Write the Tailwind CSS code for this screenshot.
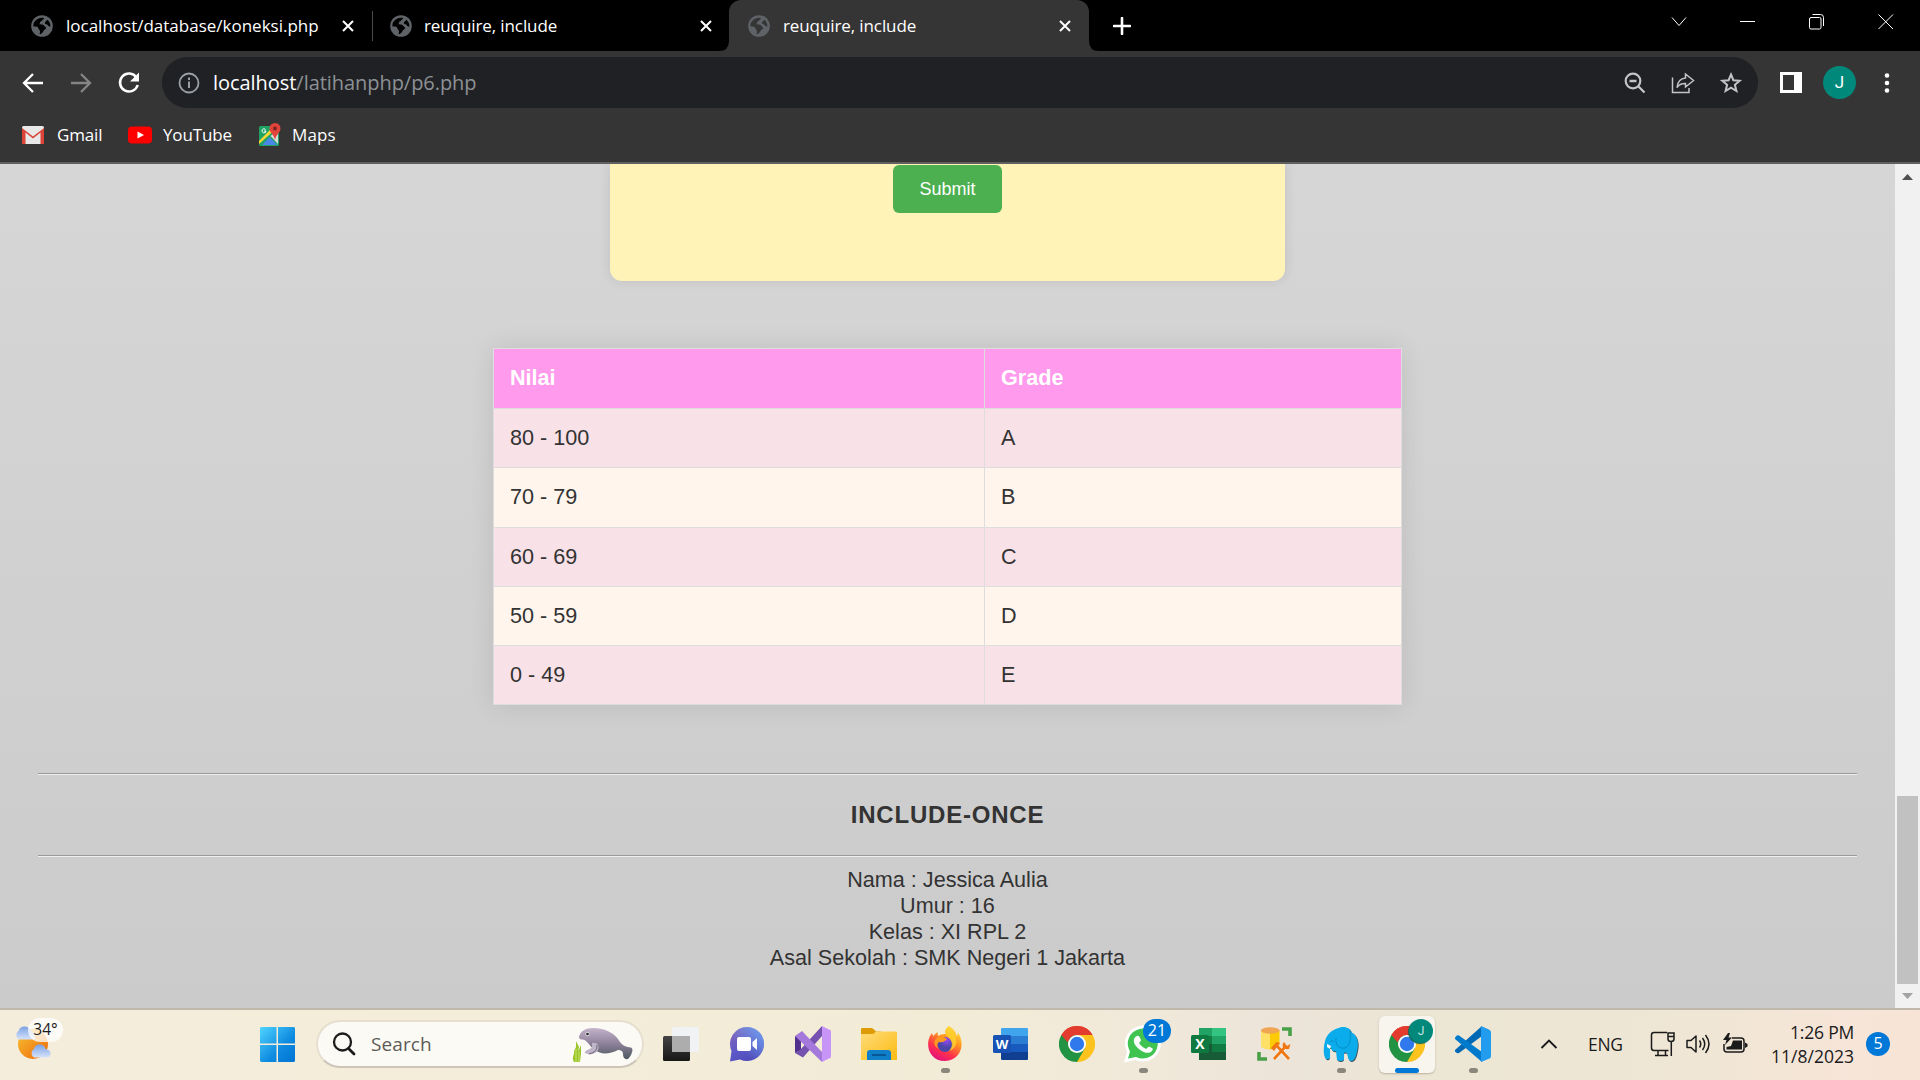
<!DOCTYPE html>
<html lang="en">
<head>
<meta charset="utf-8">
<title>reuquire, include</title>
<script src="https://cdn.jsdelivr.net/npm/@tailwindcss/browser@4"></script>
</head>
<body class="w-[1920px] h-[1080px] overflow-hidden flex flex-col bg-black font-['Open_Sans','Noto_Sans',sans-serif]">
<svg class="hidden">
  <symbol id="globe" viewBox="0 0 22 22"><circle cx="11" cy="11" r="10.8" fill="#5f6368"/><path class="fill-(--land)" d="M3 7.500C5 4 8 2.500 12.500 2.700L13 4C11 4.600 11.500 6 10 6.300C8.500 6.800 9.500 8.500 8 9.200C9.500 9.500 12 9 13 10.500C13.500 11.800 15 11.500 15 13C15 14.500 13 14.500 12.500 16C12.200 17.800 10.500 18 9.500 19.300L8.500 19C9.500 16.500 9 15.500 8 14.500C7 13.500 7.500 12.500 6.500 12C5 11.300 3.300 11.500 2.500 11.500C2.300 10 2.500 8.500 3 7.500ZM16.500 4.800C18.500 6.500 19.500 9 19.400 11.800L17.500 11C16.500 10.500 16.700 9 15.300 9.200C13.700 9.200 13.500 7.700 14.500 6.800Z"/></symbol>
  <symbol id="cross" viewBox="0 0 12 12"><path d="M1 1 11 11M11 1 1 11" stroke="#fff" stroke-width="2" fill="none"/></symbol>
  <symbol id="chrome" viewBox="0 0 36 36">
    <path d="M18 18 2.400 9A18 18 0 0 1 33.600 9Z" fill="#e33b2e"/><path d="M18 18 33.600 9A18 18 0 0 1 18 36Z" fill="#fcc31e"/><path d="M18 18V36A18 18 0 0 1 2.400 9Z" fill="#229342"/>
    <path d="M18 9H33.600L25.800 22.500Z" fill="#fcc31e"/><path d="M25.800 22.500 18 36L10.200 22.500Z" fill="#229342"/><path d="M10.200 22.500 2.400 9H18Z" fill="#229342"/><path d="M2.400 9A18 18 0 0 1 33.600 9H18A9 9 0 0 0 10.200 13.500L8 17Z" fill="#e33b2e"/><path d="M2.400 9 10.200 22.500 9 17Z" fill="#229342"/>
    <circle cx="18" cy="18" r="9" fill="#fff"/><circle cx="18" cy="18" r="7.200" fill="#3079ed"/>
  </symbol>
</svg>

<!-- Tab strip -->
<div class="h-[51px] shrink-0 flex items-start text-white text-[17px] whitespace-nowrap">
  <div class="w-[373px] h-[51px] flex items-center pl-[31px] pr-0">
    <svg class="size-[22px] mr-[13px] [--land:#000]"><use href="#globe"/></svg>
    <span class="w-[276px]">localhost/database/koneksi.php</span>
    <svg class="size-3"><use href="#cross"/></svg>
    <span class="ml-auto w-px h-[30px] bg-[#4a4a4a]"></span>
  </div>
  <div class="w-[356px] h-[51px] flex items-center pl-[17px]">
    <svg class="size-[22px] mr-[12px] [--land:#000]"><use href="#globe"/></svg>
    <span class="w-[276px] tracking-[-0.1px]">reuquire, include</span>
    <svg class="size-3"><use href="#cross"/></svg>
  </div>
  <div class="relative w-[360px] h-[51px] flex items-center pl-[19px] bg-[#353535] rounded-t-[12px]">
    <svg class="absolute left-[-10px] bottom-0 size-[10px]" viewBox="0 0 10 10"><path d="M10 0V10H0Q10 10 10 0Z" fill="#353535"/></svg>
    <svg class="absolute right-[-10px] bottom-0 size-[10px]" viewBox="0 0 10 10"><path d="M0 0V10H10Q0 10 0 0Z" fill="#353535"/></svg>
    <svg class="size-[22px] mr-[13px] [--land:#353535]"><use href="#globe"/></svg>
    <span class="w-[276px] tracking-[-0.1px]">reuquire, include</span>
    <svg class="size-3"><use href="#cross"/></svg>
  </div>
  <svg class="w-[18px] h-[18px] ml-[24px] mt-[17px]" viewBox="0 0 18 18"><path d="M9 1V17M1 9H17" stroke="#fff" stroke-width="2.600" stroke-linecap="round"/></svg>
  <div class="ml-auto mr-[26px] mt-[14px] flex gap-[53px]">
    <svg class="size-4" viewBox="0 0 16 16"><path d="M1 3.500 8 11.500 15 3.500" stroke="#fff" fill="none"/></svg>
    <svg class="size-4" viewBox="0 0 16 16"><path d="M0 7.500H15" stroke="#fff"/></svg>
    <svg class="size-4" viewBox="0 0 16 16"><rect x=".5" y="3.500" width="11.500" height="11.500" rx="1.500" stroke="#fff" fill="none"/><path d="M3.500 .5H11.500Q14.500 .5 14.500 3.500V12" stroke="#fff" fill="none"/></svg>
    <svg class="size-4" viewBox="0 0 16 16"><path d="M.5 .5 15 15M15 .5 .5 15" stroke="#fff"/></svg>
  </div>
</div>

<!-- Toolbar -->
<div class="h-[63px] shrink-0 bg-[#353535] flex items-center pl-[21px]">
  <svg class="size-6 mr-6" viewBox="0 0 24 24"><path d="M22 12H3.500M12 3 3 12 12 21" stroke="#fff" stroke-width="2.300" fill="none"/></svg>
  <svg class="size-6 mr-6" viewBox="0 0 24 24"><path d="M2 12H20.500M12 3 21 12 12 21" stroke="#858585" stroke-width="2.300" fill="none"/></svg>
  <svg class="size-6 mr-[21px]" viewBox="0 0 24 24"><path d="M19.500 6.500A9 9 0 1 0 20.700 14" stroke="#fff" stroke-width="2.500" fill="none"/><path d="M22 1.500V10.500H13Z" fill="#fff"/></svg>
  <div class="w-[1596px] h-[51px] rounded-full bg-[#202124] flex items-center pl-[16px] pr-[15px]">
    <svg class="size-[22px] mr-[13px]" viewBox="0 0 22 22"><circle cx="11" cy="11" r="9.500" stroke="#9aa0a6" stroke-width="1.800" fill="none"/><path d="M11 9.500V16M11 5.500V8" stroke="#9aa0a6" stroke-width="2"/></svg>
    <span class="text-[20px] text-[#8d9196] whitespace-nowrap tracking-[-0.05px]"><span class="text-white">localhost</span>/latihanphp/p6.php</span>
    <svg class="ml-auto size-6 mr-6" viewBox="0 0 24 24"><circle cx="10" cy="10" r="7.300" stroke="#c3c4c6" stroke-width="2.200" fill="none"/><path d="M6.500 10H13.500M15 15 21.500 21.500" stroke="#c3c4c6" stroke-width="2.300"/></svg>
    <svg class="size-6 mr-6" viewBox="0 0 24 24"><path d="M1.500 6.500V21.500H18V17M14.500 3 22.500 9.500 14.500 16V12.500C10.500 12.300 8 13.500 6 16.500C6.500 11 9.500 7.500 14.500 7Z" stroke="#c3c4c6" stroke-width="1.500" fill="none"/></svg>
    <svg class="size-6" viewBox="0 0 24 24"><path d="M12 3.500 14.400 9.200 20.700 9.700 15.900 13.800 17.400 20 12 16.700 6.600 20 8.100 13.800 3.300 9.700 9.600 9.200Z" stroke="#c3c4c6" stroke-width="2" fill="none"/></svg>
  </div>
  <svg class="w-[22px] h-[21px] ml-[22px]" viewBox="0 0 22 21"><path fill-rule="evenodd" d="M0 0H22V21H0ZM3 3V18H14V3Z" fill="#fff"/></svg>
  <div class="size-[33px] ml-[21px] rounded-full bg-[#00897b] text-white text-[17px] flex items-center justify-center font-[Roboto]">J</div>
  <svg class="w-[6px] h-[22px] ml-[28px]" viewBox="0 0 6 22"><circle cx="3" cy="3.500" r="2.300" fill="#fff"/><circle cx="3" cy="11" r="2.300" fill="#fff"/><circle cx="3" cy="18.500" r="2.300" fill="#fff"/></svg>
</div>

<!-- Bookmarks bar -->
<div class="h-[50px] shrink-0 bg-[#353535] border-b-2 border-[#606060] flex items-center pl-[21px] pb-[7px] text-white text-[17px] whitespace-nowrap">
  <svg class="w-6 h-[22px] mr-3" viewBox="0 0 24 22"><rect x="1" y="2" width="22" height="18" rx="1.500" fill="#e8e8e8"/><path d="M1 20V4L12 12.500 23 4V20H19.500V8.500L12 14.500 4.500 8.500V20Z" fill="#dc4437"/></svg>
  <span class="w-[71px] tracking-[-0.15px]">Gmail</span>
  <svg class="w-6 h-[22px] mr-[11px]" viewBox="0 0 24 22"><rect y="2.500" width="24" height="17" rx="4" fill="#f00"/><path d="M9.500 7.500 16 11 9.500 14.500Z" fill="#fff"/></svg>
  <span class="w-[95px] tracking-[-0.15px]">YouTube</span>
  <svg class="w-[23px] h-[24px] mr-[11px]" viewBox="0 0 23 24"><rect x="1" y="3" width="20" height="20" rx="1.500" fill="#1ea362"/><path d="M1 21V18L15 4H20Z" fill="#fdd835"/><path d="M12.500 13 20 7V21Z" fill="#dadada"/><path d="M4 22 11.500 14 19.500 22Z" fill="#4a86e8"/><path d="M17 0A5.500 5.500 0 0 1 22.500 5.500C22.500 10 18 11 17 17C16 11 11.500 10 11.500 5.500A5.500 5.500 0 0 1 17 0Z" fill="#e0443a"/><circle cx="17" cy="5.500" r="1.900" fill="#7b231e"/><path d="M7.500 6.500A2 2 0 1 0 8 8H6" stroke="#fff" fill="none"/></svg>
  <span class="tracking-[0.1px]">Maps</span>
</div>

<!-- Web page -->
<div class="h-[844px] shrink-0 flex font-['Liberation_Sans',Arial,sans-serif]">
  <main class="w-[1895px] h-full overflow-hidden bg-linear-to-b from-[#d6d6d6] to-[#cbcbcb] flex flex-col items-center text-[#333] text-[21.6px]">
    <section class="w-[675px] h-[117px] shrink-0 rounded-b-[12px] bg-[#fff3b8] shadow-[0_0_12px_rgba(0,0,0,0.1)] flex justify-center items-start pt-px">
      <button class="w-[109px] h-[48px] rounded-[6px] bg-[#4caf50] text-white text-[18px]">Submit</button>
    </section>
    <table class="w-[909px] h-[357px] mt-[67px] border-collapse table-fixed text-left shadow-[0_0_24px_rgba(0,0,0,0.1)] [&_td]:border [&_th]:border [&_td]:border-[#ddd] [&_th]:border-[#ddd] [&_td]:px-4 [&_th]:px-4 [&_td]:py-0 [&_th]:py-0">
      <colgroup><col class="w-[491px]"><col></colgroup>
      <tr class="h-[60px] bg-[#ff9aed] text-white"><th>Nilai</th><th>Grade</th></tr>
      <tr class="h-[59px] bg-[#f8e1e7]"><td>80 - 100</td><td>A</td></tr>
      <tr class="h-[60px] bg-[#fff5ec]"><td>70 - 79</td><td>B</td></tr>
      <tr class="h-[59px] bg-[#f8e1e7]"><td>60 - 69</td><td>C</td></tr>
      <tr class="h-[59px] bg-[#fff5ec]"><td>50 - 59</td><td>D</td></tr>
      <tr class="h-[59px] bg-[#f8e1e7]"><td>0 - 49</td><td>E</td></tr>
    </table>
    <div class="w-[1819px] mt-[68px] h-[2px] shrink-0 border-t border-b border-t-[#9a9a9a] border-b-[#eee]"></div>
    <h2 class="h-[80px] shrink-0 flex items-center pb-px text-[24px] font-bold tracking-[0.8px]">INCLUDE-ONCE</h2>
    <div class="w-[1819px] h-[2px] shrink-0 border-t border-b border-t-[#9a9a9a] border-b-[#eee]"></div>
    <div class="pt-[10px] text-center leading-[26px]">
      <p>Nama : Jessica Aulia</p><p>Umur : 16</p><p>Kelas : XI RPL 2</p><p>Asal Sekolah : SMK Negeri 1 Jakarta</p>
    </div>
  </main>
  <div class="w-[25px] bg-[#f1f1f1] flex flex-col items-center">
    <svg class="w-[11px] h-[6px] mt-[10px]" viewBox="0 0 11 6"><path d="M0 6 5.500 0 11 6Z" fill="#505050"/></svg>
    <div class="w-[21px] h-[188px] mt-[616px] bg-[#c1c1c1]"></div>
    <svg class="w-[11px] h-[6px] mt-[9px]" viewBox="0 0 11 6"><path d="M0 0 5.500 6 11 0Z" fill="#a3a3a3"/></svg>
  </div>
</div>

<!-- Taskbar -->
<div class="h-[72px] shrink-0 border-t-2 border-[#c0b8ab] pb-[2px] bg-[linear-gradient(90deg,#f5eddb_0%,#f2ecd7_50%,#f0e8d9_60%,#ece4d9_67%,#ece6d4_75%,#efe6d5_88%,#f6e5d8_96%,#f7e4d7_100%)] flex items-center whitespace-nowrap text-[#1b1b1b]">
  <div class="relative w-[260px] h-[70px]">
    <svg class="absolute left-[13px] top-[15px] w-[40px] h-[36px]" viewBox="0 0 40 36">
      <defs><linearGradient id="sun" x2="1" y2="1"><stop stop-color="#f5c431"/><stop offset="1" stop-color="#f0660c"/></linearGradient><linearGradient id="cl" x2="0" y2="1"><stop stop-color="#7ba2e4"/><stop offset="1" stop-color="#d6e3fa"/></linearGradient></defs>
      <circle cx="20" cy="20" r="15" fill="url(#sun)"/><path d="M6 15.500A5 5 0 0 1 5.500 7Q7 2 12 2.500Q17 3 18 7Q23 9 22 15.500Z" fill="url(#cl)"/><path d="M21 33.500A5 5 0 0 1 21 25Q22 20 27 20.500Q32 21 32.500 25Q38 26 37.500 30Q37 33.500 33 33.500Z" fill="url(#cl)"/>
    </svg>
    <span class="absolute left-[28px] top-[9px] w-[35px] h-[24px] rounded-full bg-white/75 text-[15.500px] leading-[23px] text-center">34°</span>
  </div>
  <svg class="w-[35px] h-[35px]" viewBox="0 0 35 35"><defs><linearGradient id="win" gradientUnits="userSpaceOnUse" x1="0" y1="0" x2="35" y2="35"><stop stop-color="#50d4ff"/><stop offset=".6" stop-color="#0e8ae0"/><stop offset="1" stop-color="#0074d2"/></linearGradient></defs><path d="M1 0H16.500V16.500H0V1ZM18 0H34L35 1V16.500H18ZM0 18H16.500V35H1L0 34ZM18 18H35V34L34 35H18Z" fill="url(#win)"/></svg>
  <div class="ml-[21px] w-[328px] h-[48px] rounded-full bg-[#fcfaf5] border-2 border-[#e6dfcf] border-b-[#cdc6b8] flex items-center pl-[14px] pr-[8px]">
    <svg class="size-6" viewBox="0 0 24 24"><circle cx="10.500" cy="10" r="8.500" stroke="#1c1c1c" stroke-width="2.300" fill="none"/><path d="M16.500 16.500 22 22" stroke="#1c1c1c" stroke-width="2.800" stroke-linecap="round"/></svg>
    <span class="ml-[15px] text-[19px] text-[#5c5a57] tracking-[0.1px]">Search</span>
    <svg class="ml-auto w-[62px] h-[38px]" viewBox="0 0 62 38"><defs><linearGradient id="man" x2="0" y2="1"><stop stop-color="#c3b3cb"/><stop offset=".5" stop-color="#8e829a"/><stop offset="1" stop-color="#4c5860"/></linearGradient></defs>
      <path d="M2 37C-1 32 3 30 2 26L4 22V16L7 22 6 27 9 20V29L8 37Z" fill="#9bc62b"/><path d="M4 37V24M7 37V27" stroke="#c9e06a" stroke-width="1" fill="none"/>
      <path d="M7 12C8 6 14 3 21 3C33 3 43 8 48 17C51 21 54 22 59 22.500C62 24 60 29 57 33C54 36 51 33 51 29C51 26 49 25 46 25C38 29 29 30 23 25C18 22 15 15 11 14.500C8.500 14.500 7 14 7 12Z" fill="url(#man)"/>
      <path d="M20 18C25 17 28 20 26 25C23 30 17 30 13 28C12 25 18 25 20 22Z" fill="#c0b4c9"/><path d="M25 20Q26 27 17 29" stroke="#6b6775" fill="none"/><circle cx="15.500" cy="9" r="2" fill="#eee"/><circle cx="15.500" cy="9" r="1.300" fill="#222"/></svg>
  </div>
  <div class="ml-[4px] flex">
    <div class="w-[66px] h-[70px] flex items-center justify-center"><svg class="size-9" viewBox="0 0 36 36"><defs><linearGradient id="tv" x2="0" y2="1"><stop stop-color="#444"/><stop offset="1" stop-color="#171717"/></linearGradient></defs><rect y="10" width="27" height="25" rx="1.500" fill="url(#tv)"/><rect x="9" y="1" width="27" height="25" rx="1.500" fill="#f1f2f4"/><path d="M9 10H27V26H9Z" fill="#adadad"/></svg></div>
    <div class="w-[66px] h-[70px] flex items-center justify-center"><svg class="size-9" viewBox="0 0 36 36"><defs><linearGradient id="tm" x2=".6" y2="1"><stop stop-color="#8a68b4"/><stop offset=".6" stop-color="#5d59c8"/><stop offset="1" stop-color="#4e4bb8"/></linearGradient><linearGradient id="tm2" x1="1" y1="0" x2=".3" y2=".6"><stop stop-color="#70a5f2"/><stop offset="1" stop-color="#70a5f2" stop-opacity="0"/></linearGradient></defs><path d="M18 1A17 17 0 1 1 11 33.500L1 35.500 2.500 25A17 17 0 0 1 18 1Z" fill="url(#tm)"/><circle cx="18" cy="18" r="17" fill="url(#tm2)"/><rect x="8" y="11" width="14" height="14" rx="2" fill="#fff"/><path d="M23.500 16 28 12V24L23.500 20Z" fill="#fff"/></svg></div>
    <div class="w-[66px] h-[70px] flex items-center justify-center"><svg class="size-9" viewBox="0 0 36 36"><path d="M0 10 6 12V24L0 27Z" fill="#52308d"/><path d="M0 27 8 31.500 27 10V0L5 24Z" fill="#7652b0"/><path d="M0 10 7 5 27 26V36Z" fill="#a579dc"/><path d="M27 0 36 4.500V31.500L27 36Z" fill="#c795f8"/></svg></div>
    <div class="w-[66px] h-[70px] flex items-center justify-center"><svg class="size-9" viewBox="0 0 36 36"><defs><linearGradient id="fo" x2="1" y2="1"><stop stop-color="#ffdc7a"/><stop offset="1" stop-color="#fbbb12"/></linearGradient></defs><path d="M0 10V3Q0 2 1.500 2H10.500Q12 2 15 5.500H20V10Z" fill="#dd9c06"/><path d="M0 8H11Q13 8 15 5.500H35Q36 5.500 36 6.500V34H0Z" fill="url(#fo)"/><path d="M6 34V27Q6 24 9 24H27Q30 24 30 27V34Z" fill="#0f7fca"/><path d="M11 29H25" stroke="#084c8a" stroke-width="1.600"/></svg></div>
    <div class="relative w-[66px] h-[70px] flex items-center justify-center"><svg class="size-9" viewBox="0 0 36 36"><defs><linearGradient id="ff" x1=".9" y1="0" x2=".35" y2="1"><stop stop-color="#fff44f"/><stop offset=".4" stop-color="#ff9a1f"/><stop offset=".75" stop-color="#ff2f4e"/><stop offset="1" stop-color="#e3127c"/></linearGradient><radialGradient id="fp" cx=".6" cy=".2"><stop stop-color="#9a48f7"/><stop offset="1" stop-color="#4a47a8"/></radialGradient></defs><path d="M22 0C27 3 29 6 29.500 10C31 9 31 7.500 30.500 6C38 15 36 34 18 35C3 35-2 20 3 10L5 7 6 10 10.500 6 11 10C15 8 17 8 19 8C17 5 19 2 22 0Z" fill="url(#ff)"/><circle cx="18" cy="18.500" r="7.500" fill="url(#fp)"/><path d="M9 13C13 9 18 10 20 14C18 14 17 17 13 16C10 16 9 20 12 23C7 21 6 16 9 13Z" fill="#ff991f"/><path d="M22 0C17 4 18 8 21 11C27 16 25 22 22 25C31 22 30 14 28 10C26 5 23 4 22 0Z" fill="#ffd52e" fill-opacity=".75"/></svg><span class="absolute bottom-[6px] w-[9px] h-[5px] rounded-full bg-[#8b877c]"></span></div>
    <div class="w-[66px] h-[70px] flex items-center justify-center"><svg class="size-9" viewBox="0 0 36 36"><path d="M8 3Q8 2 9.500 2H34Q35 2 35 3V10H8Z" fill="#41a5ee"/><path d="M8 10H35V18H8Z" fill="#2b7cd3"/><path d="M8 18H35V26H8Z" fill="#185abd"/><path d="M8 26H35V33Q35 34 34 34H9.500Q8 34 8 33Z" fill="#103f91"/><rect y="9" width="18" height="18" rx="1.500" fill="#1752b4"/><text x="9" y="22.500" text-anchor="middle" font-size="13" font-weight="700" fill="#fff">W</text></svg></div>
    <div class="w-[66px] h-[70px] flex items-center justify-center"><svg class="size-9"><use href="#chrome"/></svg></div>
    <div class="relative w-[66px] h-[70px] flex items-center justify-center"><svg class="size-[38px]" viewBox="0 0 38 38"><path d="M0 37.500 3 27A18 18 0 1 1 11.500 35Z" fill="#fff"/><path d="M4 33.500 6 26.500A15 15 0 1 1 12 32Z" fill="#41c351"/><path d="M13 11C15 10 15.500 12 17 15C17 17 14 17 16 19.500Q19 23 22 24C24 23 24 21 26 22C29 23.500 29.500 23.500 28 26C25 29 21 28 17 25.500C12 22 9 18 10 14Q11 11.500 13 11Z" fill="#fff"/></svg><span class="absolute left-[33px] top-[10px] w-[28px] h-[24px] rounded-full bg-[#0078d7] text-white text-[16px] leading-[23px] text-center">21</span><span class="absolute bottom-[6px] w-[9px] h-[5px] rounded-full bg-[#8b877c]"></span></div>
    <div class="w-[66px] h-[70px] flex items-center justify-center"><svg class="size-9" viewBox="0 0 36 36"><path d="M8 2H35V34H8Z" fill="#107c41"/><path d="M8 2H21V10H8Z" fill="#21a366"/><path d="M21 2H35V10H21Z" fill="#33c481"/><path d="M21 10H35V18H21Z" fill="#21a366"/><path d="M8 18H21V34H8ZM21 26H35V34H21Z" fill="#185c37"/><rect y="9" width="18" height="18" rx="1.500" fill="#0f7a40"/><text x="9" y="22.500" text-anchor="middle" font-size="14" font-weight="700" fill="#fff">X</text></svg></div>
    <div class="w-[66px] h-[70px] flex items-center justify-center"><svg class="size-9" viewBox="0 0 36 36"><path d="M25 3H33V10M2 26V33H10" stroke="#48a048" stroke-width="3.600" fill="none"/><path d="M4 4V21Q9 24 13 23.500V4Z" fill="#ffe066"/><path d="M13 4V23.500Q19 23 22.500 21V4Z" fill="#fccb06"/><ellipse cx="13.200" cy="4.500" rx="9.300" ry="3.300" fill="#efa552"/><path d="M18 32.500 29 20M19 19.500 31 32.500" stroke="#f3ebe1" stroke-width="5"/><path d="M17 33 28.500 20.500M20 20 32 33" stroke="#ef7612" stroke-width="2.600"/><path d="M14 22 19.500 16 23 17 17 25M27 16C24 20 26 24 32 23L33.500 18 30 20 28.500 18Z" fill="#ef7612"/></svg></div>
    <div class="relative w-[66px] h-[70px] flex items-center justify-center"><svg class="size-9" viewBox="0 0 36 36"><path d="M3 33C0 30 0 20 3 12C6 6 11 3 17 1.500C23 0 28 3 28 6C35 9 36 18 34 25C33 31 31 35 28 35C25 35 25 30 24 27Q22 26 20 27L20 34Q17 36 14 34L13 25Q9 26 8 22L6 22V32Q5 34 3 33Z" fill="#3c5661" transform="translate(.8 1)"/><path d="M3 33C0 30 0 20 3 12C6 6 11 3 17 1.500C23 0 28 3 28 6C35 9 36 18 34 25C33 31 31 35 28 35C25 35 25 30 24 27Q22 26 21 27L21 34Q17 36 14 34L13 25Q9 26 8 22L7 22V32Q5 34 3 33Z" fill="#0aaceb"/><path d="M13 12C12 19 16 23 22 22C27 20 28 13 27 5M7 16Q9 13 11 16" stroke="#078cc6" fill="none"/><path d="M4 18 8 20 7 23 4 21Z" fill="#fff"/></svg><span class="absolute bottom-[6px] w-[9px] h-[5px] rounded-full bg-[#8b877c]"></span></div>
    <div class="relative w-[66px] h-[70px] flex items-center justify-center"><span class="absolute left-[5px] top-[7px] w-[56px] h-[57px] rounded-[6px] bg-[#f8f5ef] shadow-[0_1px_2px_rgba(80,60,30,0.3)]"></span><svg class="relative size-9"><use href="#chrome"/></svg><span class="absolute left-[35px] top-[10px] size-6 rounded-full bg-[#00897b] shadow-[-1px_1px_1px_#12665c] text-[#c4e4df] text-[12px] leading-[24px] text-center font-[Roboto]">J</span><span class="absolute bottom-[6px] w-[24px] h-[5px] rounded-full bg-[#0078d7]"></span></div>
    <div class="relative w-[66px] h-[70px] flex items-center justify-center"><svg class="size-9" viewBox="0 0 36 36"><path d="M0 24 27 0V10L4 27Q2 28 0 25.500Z" fill="#0069b5"/><path d="M0 11.500Q2 8.500 4 9.500L27 26V36L0 13Z" fill="#007acc"/><path d="M26 0 34 3.500Q36 4.500 36 6V30Q36 32 34.500 32.500L26 36Z" fill="#229cee"/></svg><span class="absolute bottom-[6px] w-[9px] h-[5px] rounded-full bg-[#8b877c]"></span></div>
  </div>
  <svg class="ml-[34px] w-[18px] h-[12px]" viewBox="0 0 18 12"><path d="M1.500 10 9 2.500 16.500 10" stroke="#1b1b1b" stroke-width="1.900" fill="none"/></svg>
  <span class="ml-[30px] w-[62px] text-[17.500px] tracking-[-0.3px]">ENG</span>
  <svg class="w-[25px] h-[26px]" viewBox="0 0 25 26"><path d="M17 1.500H4Q1.500 1.500 1.500 4V17Q1.500 19.500 4 19.500H18.500M8 20V24.500M15.500 20V24.500M5 24.500H18M18 2H24V8Q24 10.500 21 10.500T18 8ZM18 5.500H24M21.300 10.500V25" stroke="#1b1b1b" stroke-width="1.500" fill="none"/></svg>
  <svg class="ml-[11px] w-[25px] h-[22px]" viewBox="0 0 25 22"><path d="M1 7.500H5L10 3V19L5 14.500H1ZM13.500 7.500Q16 11 13.500 14.500M16.500 5Q21 11 16.500 17M19.500 2Q26.500 11 19.500 20" stroke="#1b1b1b" stroke-width="1.500" fill="none" stroke-linejoin="round"/></svg>
  <svg class="ml-[12px] w-[25px] h-[22px]" viewBox="0 0 25 22"><path d="M9 5H18Q21 5 21 8V16Q21 19 18 19H4Q1 19 1 16V11" stroke="#1b1b1b" stroke-width="1.500" fill="none"/><path d="M10 7.500H19V16.500H3.500V14L8 13Z" fill="#1b1b1b"/><path d="M22 9.500 24.500 11V13.500L22 15ZM5 0 0 7H3.500L2 12 9 4.500H5.500L7 0Z" fill="#1b1b1b"/></svg>
  <div class="ml-auto text-right text-[17.500px] leading-[24px] -mt-[1px]"><p class="tracking-[-0.2px]">1:26 PM</p><p>11/8/2023</p></div>
  <span class="ml-[12px] mr-[30px] size-6 rounded-full bg-[#0078d7] text-white text-[16px] leading-[23px] text-center">5</span>
</div>
</body>
</html>
